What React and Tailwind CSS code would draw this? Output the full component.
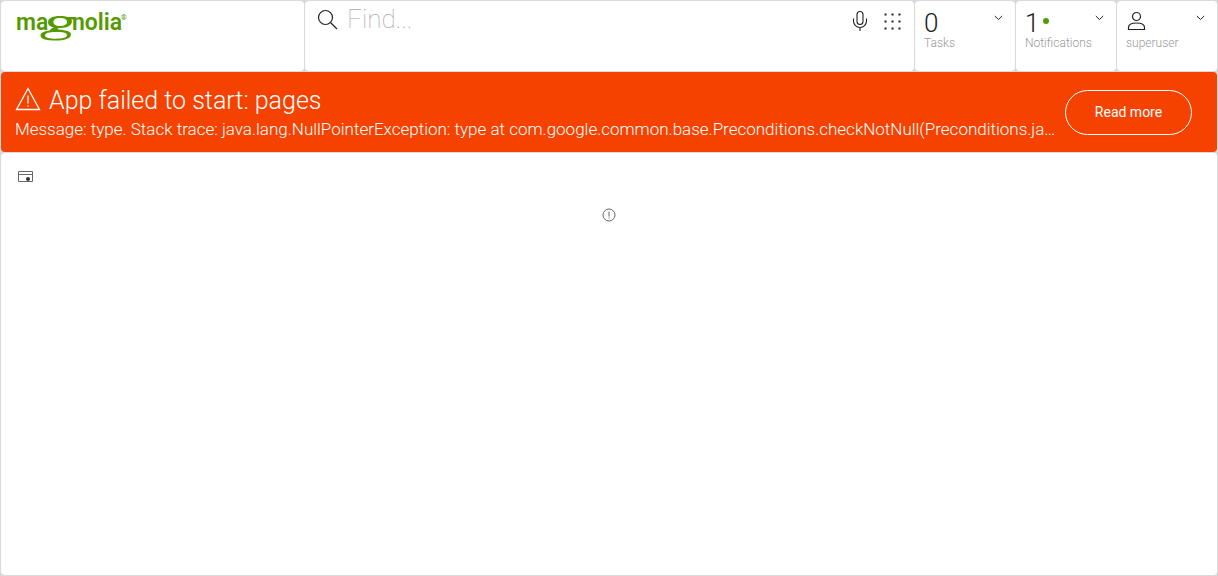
import React from 'react';

const icon = { fill: 'none', stroke: 'currentColor', 'aria-hidden': true };

function Logo() {
  return (
    <svg width="114" height="32" viewBox="0 0 114 32" role="img" aria-label="magnolia" className="overflow-visible text-[#549a00]">
      <g fill="currentColor" className="font-['Roboto'] text-[23px] leading-none font-semibold">
        <text x="0" y="19">ma</text>
        <text x="56" y="19">nolia</text>
        <text x="105" y="9" className="text-[7px]">®</text>
      </g>
      <path
        fill="currentColor"
        fillRule="evenodd"
        d="M44 5C47.500 5 50 5.500 52 6H58V8.500H55.500C57.500 13.500 52 17 44 17C42 17 41 17.500 42 18.300C44 19.500 55 18.500 55 23.500C55 27.500 48 29.500 40 29.500C31 29.500 24.500 28.500 24.500 24.500C24.500 21.500 29 20 34 19.600C34 18 36 17 38 16.500C34.500 15.700 32 14 32 11.500C32 7 37 5 44 5ZM44 7C39.500 7 37.500 8.500 37.500 11C37.500 13.700 40 15 44 15C48 15 51 13.700 51 11C51 8.500 48.500 7 44 7ZM40 21C33 21 29 22 29 24.500C29 26.800 34 27.700 40 27.700C46 27.700 51 26.700 51 24.300C51 21.500 46 21 40 21Z"
      />
    </svg>
  );
}

function Chevron() {
  return (
    <svg {...icon} width="9" height="6" viewBox="0 0 9 6" className="shrink-0">
      <path d="M.8 1 4.500 4.500 8.200 1" />
    </svg>
  );
}

function Tile({ label, children }) {
  return (
    <button type="button" className="flex items-start justify-between rounded bg-white pt-2 pr-3 pl-[9px] text-left text-[#222]">
      <span className="flex flex-col">
        <span className="flex h-7 items-center gap-1 text-[26px] leading-7 font-light">{children}</span>
        <span className="text-[12px] leading-3 font-light text-[#999]">{label}</span>
      </span>
      <span className="pt-[6px]"><Chevron /></span>
    </button>
  );
}

export default function App() {
  return (
    <div className="flex min-h-screen flex-col gap-px bg-[#d9d9d9] p-px font-['Roboto',sans-serif]">
      <header className="grid h-[70px] grid-cols-[303px_minmax(0,1fr)_100px_100px_100px] gap-px">
        <div className="rounded bg-white pt-[10px] pl-[15px]"><Logo /></div>
        <div className="flex items-start rounded bg-white pr-3 pl-3">
          <svg {...icon} width="22" height="22" viewBox="0 0 22 22" strokeWidth="1.200" className="mt-2 shrink-0 text-[#222]">
            <circle cx="8.500" cy="8.500" r="7" />
            <path d="m13.500 13.500 6.500 6.500" />
          </svg>
          <input
            type="text"
            aria-label="Find"
            placeholder="Find..."
            className="ml-2 h-9 min-w-0 flex-1 bg-transparent text-[26px] font-thin text-[#222] outline-none placeholder:text-[#aaa]"
          />
          <button type="button" aria-label="Voice search" className="mt-[9px] text-[#222]">
            <svg {...icon} width="16" height="22" viewBox="0 0 16 22" strokeWidth="1.100">
              <rect x="5" y="1.500" width="6" height="13" rx="3" />
              <path d="M1.500 8.500v2.500a6.500 6.500 0 0 0 13 0V8.500M8 17.500v3.500" />
            </svg>
          </button>
          <button type="button" aria-label="Apps" className="mt-3 ml-4 text-[#222]">
            <svg width="18" height="18" viewBox="0 0 18 18" fill="currentColor" aria-hidden="true">
              {[0.5, 7.5, 14.5].map((x) => [0.5, 7.5, 14.5].map((y) => (
                <rect key={`${x}-${y}`} x={x} y={y} width="2" height="2" />
              )))}
            </svg>
          </button>
        </div>
        <Tile label="Tasks">0</Tile>
        <Tile label="Notifications">
          1<svg width="6" height="6" viewBox="0 0 6 6" aria-hidden="true" className="mb-1 text-[#549a00]"><circle cx="3" cy="3" r="3" fill="currentColor" /></svg>
        </Tile>
        <Tile label="superuser">
          <svg {...icon} width="20" height="20" viewBox="0 0 20 20" strokeWidth="1.200" className="mb-1">
            <circle cx="10.500" cy="5.500" r="4" />
            <path d="M2.500 18.500v-2c0-3 3-4.500 8-4.500s8 1.500 8 4.500v2Z" />
          </svg>
        </Tile>
      </header>

      <section role="alert" className="flex h-20 items-center rounded bg-[#f64200] pt-[2px] pr-[25px] pb-px pl-[14px] text-white">
        <div className="min-w-0 flex-1">
          <h1 className="flex items-center gap-2 text-[25px] leading-8 font-light">
            <svg {...icon} width="26" height="24" viewBox="0 0 26 24" strokeWidth="1.300" className="mb-1 shrink-0">
              <path d="M13 1.500 1.500 22.500h23Z" />
              <path d="M13 8.500v8M13 18.200v1.600" />
            </svg>
            App failed to start: pages
          </h1>
          <p className="truncate text-[17px] leading-6 font-light">
            Message: type. Stack trace: java.lang.NullPointerException: type at com.google.common.base.Preconditions.checkNotNull(Preconditions.java)
          </p>
        </div>
        <button type="button" className="ml-1 h-[45px] w-[127px] rounded-full border border-white text-[14px]">Read more</button>
      </section>

      <main className="flex flex-1 flex-col rounded bg-white pt-[18px]">
        <svg {...icon} width="15" height="12" viewBox="0 0 15 12" className="ml-[17px] text-[#666]">
          <path d="M.5.500h14v10H.5ZM.5 3.500h14" />
          <circle cx="10" cy="8" r="2" fill="#333" stroke="none" />
        </svg>
        <svg {...icon} width="14" height="14" viewBox="0 0 14 14" className="mt-[25px] self-center text-[#666]">
          <circle cx="7" cy="7" r="6" />
          <path d="M7 3.500v5M7 9.500v1" />
        </svg>
      </main>
    </div>
  );
}
